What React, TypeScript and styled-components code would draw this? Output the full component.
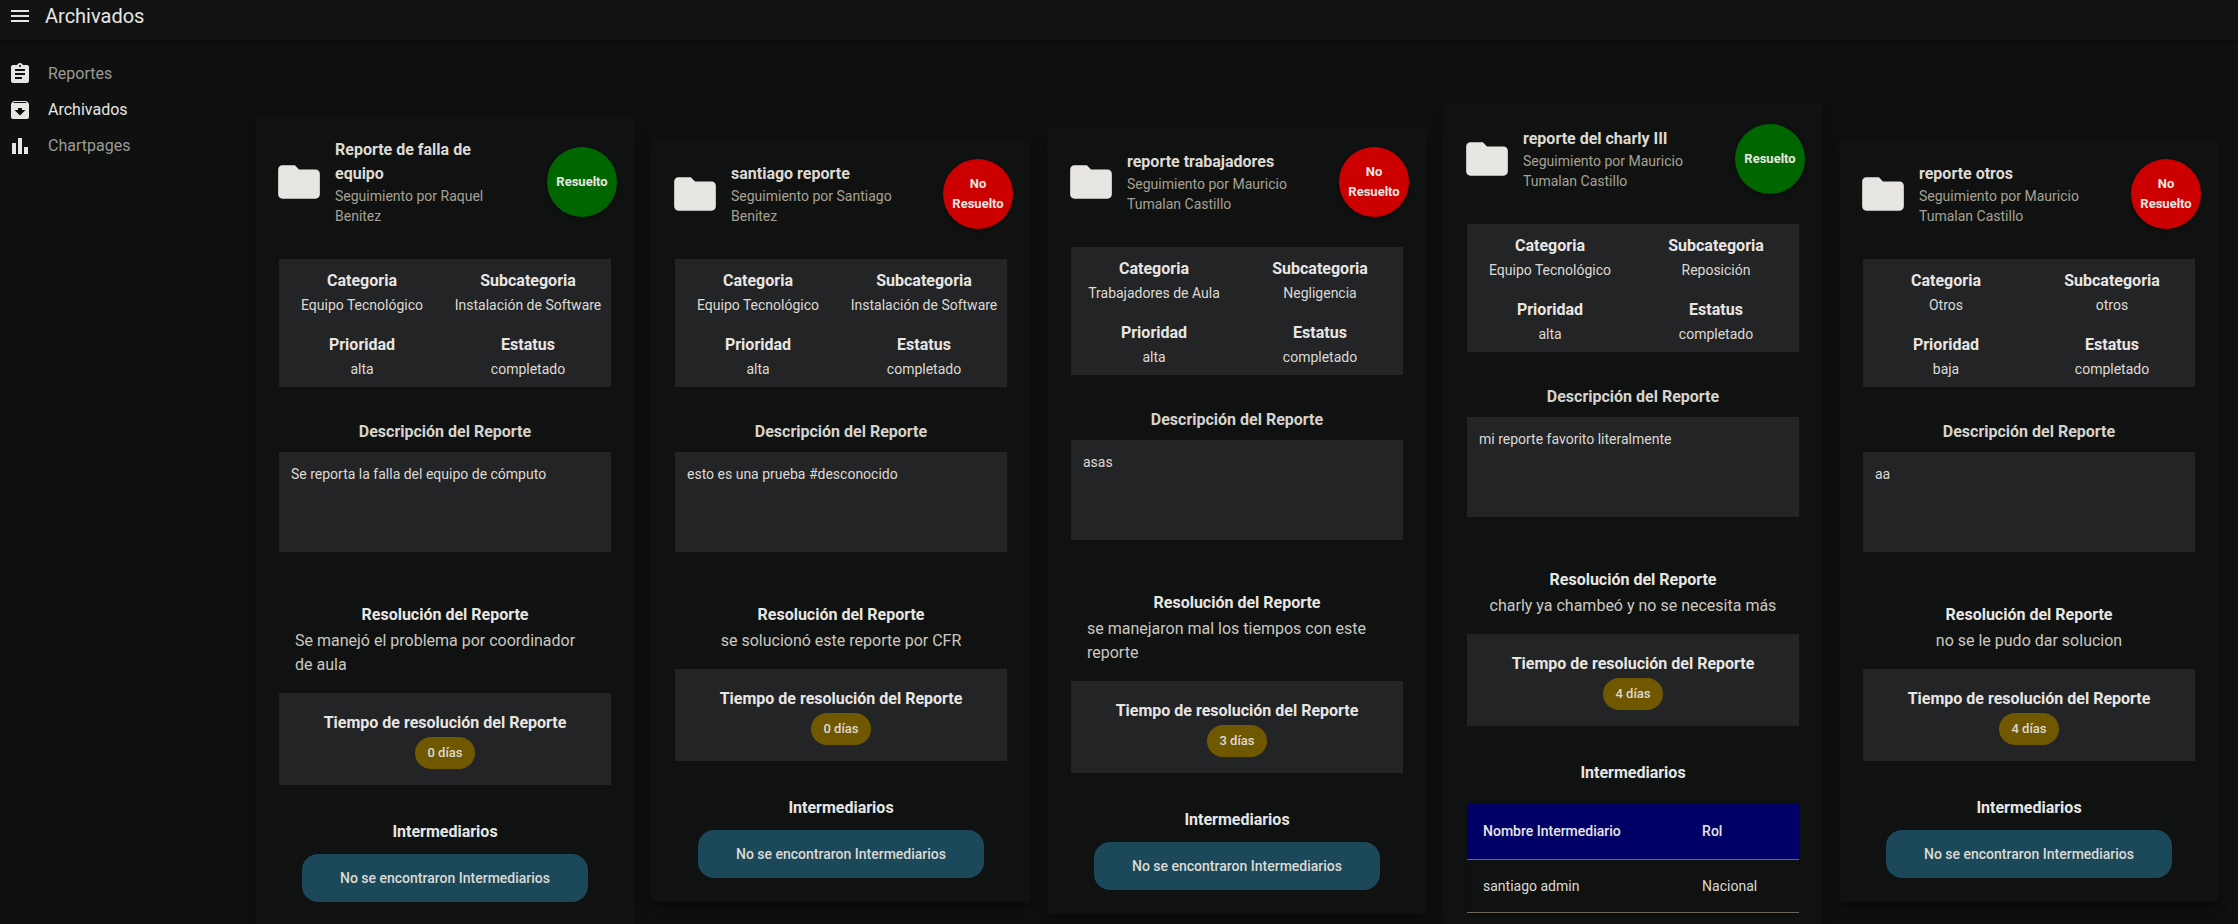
import React from "react";
import styled, { createGlobalStyle } from "styled-components";
import {
  MdArchive,
  MdAssignment,
  MdBarChart,
  MdFolder,
  MdMenu,
} from "react-icons/md";

const GlobalStyle = createGlobalStyle`
  *, *::before, *::after { box-sizing: border-box; }
  body {
    margin: 0;
    background: #0e1110;
    color: #e8e6e3;
    font-family: Roboto, "Liberation Sans", sans-serif;
    font-size: 16px;
    line-height: 24px;
  }
  h1, h2, h3, p, dl, dt, dd { margin: 0; font: inherit; }
  button { font: inherit; color: inherit; border: 0; cursor: pointer; }
`;

const Shell = styled.div`
  display: flex;
  flex-direction: column;
  height: 100vh;
`;

const TopBar = styled.header`
  display: flex;
  align-items: center;
  gap: 13px;
  padding: 0 8px 8px;
  height: 40px;
  flex: none;
  background: #101312;
  box-shadow: 0 2px 4px rgba(0, 0, 0, 0.3);
  z-index: 1;
`;

const MenuButton = styled.button`
  display: flex;
  padding: 0;
  background: none;
`;

const PageTitle = styled.h1`
  font-size: 20px;
`;

const Body = styled.div`
  display: flex;
  flex: 1;
  min-height: 0;
`;

const Sidebar = styled.nav`
  display: flex;
  flex-direction: column;
  width: 240px;
  flex: none;
  padding-top: 16px;
`;

const NavLink = styled.a<{ $active?: boolean }>`
  display: flex;
  align-items: center;
  gap: 16px;
  height: 36px;
  padding: 0 8px;
  color: ${(p) => (p.$active ? "#e8e6e3" : "#9c9a96")};
  text-decoration: none;

  svg {
    color: #e8e6e3;
  }
`;

const Board = styled.main`
  display: grid;
  grid-template-columns: repeat(auto-fill, minmax(340px, 1fr));
  gap: 16px;
  align-items: center;
  align-content: start;
  flex: 1;
  min-width: 0;
  padding: 63px 19px 24px 15px;
  overflow-y: auto;
  scrollbar-width: none;
`;

const Card = styled.article`
  padding: 8px;
  border-radius: 4px;
  background: #0f1211;
  box-shadow:
    0 5px 5px -3px rgba(0, 0, 0, 0.2),
    0 8px 10px 1px rgba(0, 0, 0, 0.14),
    0 3px 14px 2px rgba(0, 0, 0, 0.12);
`;

const CardHeader = styled.header`
  display: flex;
  align-items: center;
  gap: 16px;
  padding: 16px;
`;

const FolderIcon = styled.span`
  display: flex;
  flex: none;
  margin: -5px;
`;

const Heading = styled.div`
  flex: 1;
  min-width: 0;
`;

const CardTitle = styled.h2`
  font-weight: 700;
  color: #dddad5;
`;

const Subtitle = styled.p`
  font-size: 14px;
  line-height: 20px;
  color: #a8a095;
`;

const Status = styled.span<{ $solved: boolean }>`
  display: flex;
  align-items: center;
  justify-content: center;
  flex: none;
  width: 70px;
  height: 70px;
  margin: -4px -6px -4px 8px;
  border-radius: 50%;
  background: ${(p) => (p.$solved ? "#006600" : "#cc0000")};
  box-shadow: 0 2px 4px rgba(0, 0, 0, 0.3);
  font-size: 13px;
  line-height: 20px;
  font-weight: 700;
  text-align: center;
`;

const Section = styled.section<{ $top?: number }>`
  padding: ${(p) => p.$top ?? 16}px 16px 16px;
  border-top: 1px solid #131615;
`;

const SectionTitle = styled.h3<{ $gap?: number; $soft?: boolean }>`
  margin-bottom: ${(p) => p.$gap ?? 8}px;
  color: ${(p) => (p.$soft ? "#d6d3cd" : "#e8e6e3")};
  font-weight: 700;
  text-align: center;
`;

const Facts = styled.dl`
  display: grid;
  grid-template-columns: 1fr 1fr;
  background: #232426;
`;

const Fact = styled.div`
  display: grid;
  gap: 2px;
  padding: 10px 0 8px;
  text-align: center;

  dt {
    font-weight: 700;
  }
  dd {
    font-size: 14px;
    line-height: 20px;
    color: #dddad5;
  }
`;

const Description = styled.p`
  min-height: 100px;
  padding: 12px;
  background: #232426;
  font-size: 14px;
  line-height: 20px;
  color: #dddad5;
`;

const Resolution = styled.p`
  width: fit-content;
  margin: 0 auto 16px;
  padding: 0 16px;
  color: #ccc8c1;
`;

const TimeBox = styled.div`
  display: flex;
  flex-direction: column;
  align-items: center;
  padding: 18px 16px 16px;
  background: #232426;
`;

const Chip = styled.span`
  min-width: 60px;
  padding: 0 12px;
  border-radius: 16px;
  background: #705800;
  color: #dddad5;
  font-size: 13px;
  line-height: 32px;
  font-weight: 500;
  text-align: center;
`;

const EmptyNote = styled.p`
  width: fit-content;
  margin: 0 auto;
  padding: 0 38px;
  border-radius: 16px;
  background: #1c4959;
  color: #dddad5;
  font-size: 14px;
  line-height: 48px;
  font-weight: 500;
`;

const People = styled.table`
  width: 100%;
  border-collapse: separate;
  border-spacing: 0;
  table-layout: fixed;
  box-shadow: 0 1px 3px rgba(0, 0, 0, 0.3);
  font-size: 14px;
  line-height: 20px;
  text-align: left;

  th {
    padding: 18px 16px;
    background: #000066;
    font-weight: 500;
    border-bottom: 1px solid #6e685c;
  }
  th:first-child {
    width: 66%;
  }
  td {
    padding: 16px;
    color: #dddad5;
    border-bottom: 1px solid #6e685c;
  }
`;

interface Person {
  name: string;
  role: string;
}

interface Report {
  title: string;
  owner: string;
  solved: boolean;
  category: string;
  subcategory: string;
  priority: string;
  status: string;
  description: string;
  resolution: string;
  days: number;
  people: Person[];
}

const reports: Report[] = [
  {
    title: "Reporte de falla de equipo",
    owner: "Raquel Benitez",
    solved: true,
    category: "Equipo Tecnológico",
    subcategory: "Instalación de Software",
    priority: "alta",
    status: "completado",
    description: "Se reporta la falla del equipo de cómputo",
    resolution: "Se manejó el problema por coordinador de aula",
    days: 0,
    people: [],
  },
  {
    title: "santiago reporte",
    owner: "Santiago Benitez",
    solved: false,
    category: "Equipo Tecnológico",
    subcategory: "Instalación de Software",
    priority: "alta",
    status: "completado",
    description: "esto es una prueba #desconocido",
    resolution: "se solucionó este reporte por CFR",
    days: 0,
    people: [],
  },
  {
    title: "reporte trabajadores",
    owner: "Mauricio Tumalan Castillo",
    solved: false,
    category: "Trabajadores de Aula",
    subcategory: "Negligencia",
    priority: "alta",
    status: "completado",
    description: "asas",
    resolution: "se manejaron mal los tiempos con este reporte",
    days: 3,
    people: [],
  },
  {
    title: "reporte del charly III",
    owner: "Mauricio Tumalan Castillo",
    solved: true,
    category: "Equipo Tecnológico",
    subcategory: "Reposición",
    priority: "alta",
    status: "completado",
    description: "mi reporte favorito literalmente",
    resolution: "charly ya chambeó y no se necesita más",
    days: 4,
    people: [{ name: "santiago admin", role: "Nacional" }],
  },
  {
    title: "reporte otros",
    owner: "Mauricio Tumalan Castillo",
    solved: false,
    category: "Otros",
    subcategory: "otros",
    priority: "baja",
    status: "completado",
    description: "aa",
    resolution: "no se le pudo dar solucion",
    days: 4,
    people: [],
  },
];

function ReportCard({ report }: { report: Report }) {
  const facts = [
    ["Categoria", report.category],
    ["Subcategoria", report.subcategory],
    ["Prioridad", report.priority],
    ["Estatus", report.status],
  ];
  const hasPeople = report.people.length > 0;

  return (
    <Card>
      <CardHeader>
        <FolderIcon>
          <MdFolder size={50} />
        </FolderIcon>
        <Heading>
          <CardTitle>{report.title}</CardTitle>
          <Subtitle>{`Seguimiento por ${report.owner}`}</Subtitle>
        </Heading>
        <Status $solved={report.solved}>
          {report.solved ? "Resuelto" : "No Resuelto"}
        </Status>
      </CardHeader>
      <Section>
        <Facts>
          {facts.map(([label, value]) => (
            <Fact key={label}>
              <dt>{label}</dt>
              <dd>{value}</dd>
            </Fact>
          ))}
        </Facts>
      </Section>
      <Section>
        <SectionTitle $soft>Descripción del Reporte</SectionTitle>
        <Description>{report.description}</Description>
      </Section>
      <Section $top={34}>
        <SectionTitle $gap={2}>Resolución del Reporte</SectionTitle>
        <Resolution>{report.resolution}</Resolution>
        <TimeBox>
          <SectionTitle $gap={2}>Tiempo de resolución del Reporte</SectionTitle>
          <Chip>{`${report.days} días`}</Chip>
        </TimeBox>
      </Section>
      <Section $top={18}>
        <SectionTitle $gap={hasPeople ? 18 : 10}>Intermediarios</SectionTitle>
        {hasPeople ? (
          <People>
            <thead>
              <tr>
                <th scope="col">Nombre Intermediario</th>
                <th scope="col">Rol</th>
              </tr>
            </thead>
            <tbody>
              {report.people.map((person) => (
                <tr key={person.name}>
                  <td>{person.name}</td>
                  <td>{person.role}</td>
                </tr>
              ))}
            </tbody>
          </People>
        ) : (
          <EmptyNote>No se encontraron Intermediarios</EmptyNote>
        )}
      </Section>
    </Card>
  );
}

export default function App() {
  return (
    <>
      <GlobalStyle />
      <Shell>
        <TopBar>
          <MenuButton type="button" aria-label="Menú">
            <MdMenu size={24} />
          </MenuButton>
          <PageTitle>Archivados</PageTitle>
        </TopBar>
        <Body>
          <Sidebar>
            <NavLink href="#reportes">
              <MdAssignment size={24} />
              Reportes
            </NavLink>
            <NavLink href="#archivados" $active aria-current="page">
              <MdArchive size={24} />
              Archivados
            </NavLink>
            <NavLink href="#chartpages">
              <MdBarChart size={24} />
              Chartpages
            </NavLink>
          </Sidebar>
          <Board>
            {reports.map((report) => (
              <ReportCard key={report.title} report={report} />
            ))}
          </Board>
        </Body>
      </Shell>
    </>
  );
}
